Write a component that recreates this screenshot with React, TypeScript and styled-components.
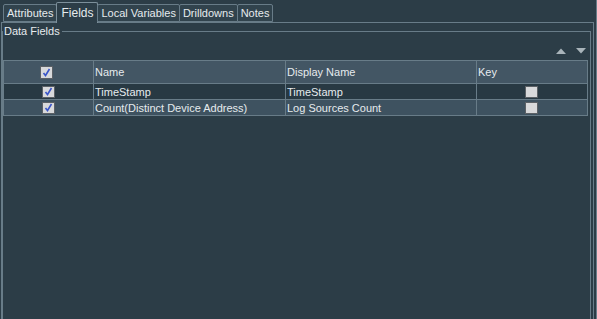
import React from "react";
import styled, { createGlobalStyle } from "styled-components";

const colour = {
  bg: "#2c3d47",
  rowDark: "#283943",
  rowLight: "#3e5260",
  header: "#435664",
  line: "#687c88",
  text: "#e6ebee",
  arrow: "#a9b4ba",
};

const GlobalStyle = createGlobalStyle`
  html, body {
    margin: 0;
    background: ${colour.bg};
  }
  body {
    font-family: "Liberation Sans", Arial, sans-serif;
    font-size: 11px;
    color: ${colour.text};
  }
`;

const Window = styled.div`
  width: 597px;
  height: 319px;
  box-sizing: border-box;
  display: flex;
  flex-direction: column;
  overflow: hidden;
  border-right: 1px solid ${colour.line};
  padding-right: 2px;
`;

const TabBar = styled.div`
  display: flex;
  align-items: flex-end;
  height: 22px;
  padding-left: 3px;
  position: relative;
  z-index: 1;
`;

const Tab = styled.div<{ $active?: boolean }>`
  box-sizing: border-box;
  height: ${(p) => (p.$active ? "21px" : "18px")};
  margin-bottom: ${(p) => (p.$active ? "-1px" : "0")};
  padding: 0 ${(p) => (p.$active ? "4px" : "3px")};
  display: flex;
  align-items: center;
  justify-content: center;
  border: 1px solid ${(p) => (p.$active ? "#7d909b" : colour.line)};
  border-bottom: ${(p) => (p.$active ? "none" : `1px solid ${colour.line}`)};
  border-radius: 2px 2px 0 0;
  background: ${(p) => (p.$active ? colour.bg : "#31434d")};
  font-size: ${(p) => (p.$active ? "12px" : "11px")};
  white-space: nowrap;
  & + & {
    margin-left: -1px;
  }
`;

const Panel = styled.div`
  flex: 1;
  margin-left: 1px;
  border-top: 1px solid ${colour.line};
  border-left: 1px solid ${colour.line};
  border-right: 1px solid ${colour.line};
  display: flex;
  flex-direction: column;
  padding: 2px 2px 0 0;
`;

const GroupBox = styled.fieldset`
  flex: 1;
  margin: 0;
  padding: 0 1px 0 0;
  border: 1px solid ${colour.line};
  border-bottom: none;
  min-width: 0;
`;

const Legend = styled.legend`
  margin-left: 0;
  padding: 0 2px 0 1px;
  font-size: 11px;
  line-height: 13px;
`;

const SortBar = styled.div`
  display: flex;
  justify-content: flex-end;
  align-items: center;
  gap: 10px;
  height: 22px;
  padding: 3px 3px 0 0;
  box-sizing: border-box;
`;

const Arrow = ({ down }: { down?: boolean }) => (
  <svg width="10" height="6" viewBox="0 0 10 6">
    <polygon
      points={down ? "0,0 10,0 5,5.5" : "0,6 10,6 5,0.5"}
      fill={colour.arrow}
    />
  </svg>
);

const Table = styled.div`
  border: 1px solid ${colour.line};
  border-bottom: none;
  width: 585px;
  box-sizing: border-box;
`;

const Row = styled.div<{ $tone: "header" | "dark" | "light" }>`
  display: grid;
  grid-template-columns: 89px 192px 191px 1fr;
  height: ${(p) => (p.$tone === "header" ? "23px" : "16px")};
  box-sizing: border-box;
  border-bottom: 1px solid ${colour.line};
  background: ${(p) =>
    p.$tone === "header"
      ? colour.header
      : p.$tone === "dark"
        ? colour.rowDark
        : colour.rowLight};
`;

const Cell = styled.div<{ $center?: boolean }>`
  display: flex;
  align-items: center;
  justify-content: ${(p) => (p.$center ? "center" : "flex-start")};
  padding-left: ${(p) => (p.$center ? "0" : "1px")};
  border-left: 1px solid ${colour.line};
  white-space: nowrap;
  overflow: hidden;
  &:first-child {
    border-left: none;
  }
`;

const CheckBox = styled.span<{ $shift?: number; $small?: boolean }>`
  box-sizing: border-box;
  width: 13px;
  height: ${(p) => (p.$small ? "12px" : "13px")};
  margin-left: ${(p) => p.$shift || 0}px;
  background: #d8d9db;
  border: 1px solid #5c6166;
  display: flex;
  align-items: center;
  justify-content: center;
`;

const Tick = () => (
  <svg width="9" height="9" viewBox="0 0 9 9">
    <path
      d="M1.5 5 L3.5 7.5 L7.5 1"
      fill="none"
      stroke="#3a55c8"
      strokeWidth="1.6"
    />
  </svg>
);

const tabs = ["Attributes", "Fields", "Local Variables", "Drilldowns", "Notes"];

const fields = [
  { name: "TimeStamp", display: "TimeStamp" },
  { name: "Count(Distinct Device Address)", display: "Log Sources Count" },
];

export default function App() {
  return (
    <>
      <GlobalStyle />
      <Window>
        <TabBar>
          {tabs.map((t) => (
            <Tab key={t} $active={t === "Fields"}>
              {t}
            </Tab>
          ))}
        </TabBar>
        <Panel>
          <GroupBox>
            <Legend>Data Fields</Legend>
            <SortBar>
              <Arrow />
              <Arrow down />
            </SortBar>
            <Table>
              <Row $tone="header">
                <Cell $center>
                  <CheckBox $shift={-4}>
                    <Tick />
                  </CheckBox>
                </Cell>
                <Cell>Name</Cell>
                <Cell>Display Name</Cell>
                <Cell>Key</Cell>
              </Row>
              {fields.map((f, i) => (
                <Row key={f.name} $tone={i % 2 === 0 ? "dark" : "light"}>
                  <Cell $center>
                    <CheckBox $small>
                      <Tick />
                    </CheckBox>
                  </Cell>
                  <Cell>{f.name}</Cell>
                  <Cell>{f.display}</Cell>
                  <Cell $center>
                    <CheckBox $small $shift={-2} />
                  </Cell>
                </Row>
              ))}
            </Table>
          </GroupBox>
        </Panel>
      </Window>
    </>
  );
}
